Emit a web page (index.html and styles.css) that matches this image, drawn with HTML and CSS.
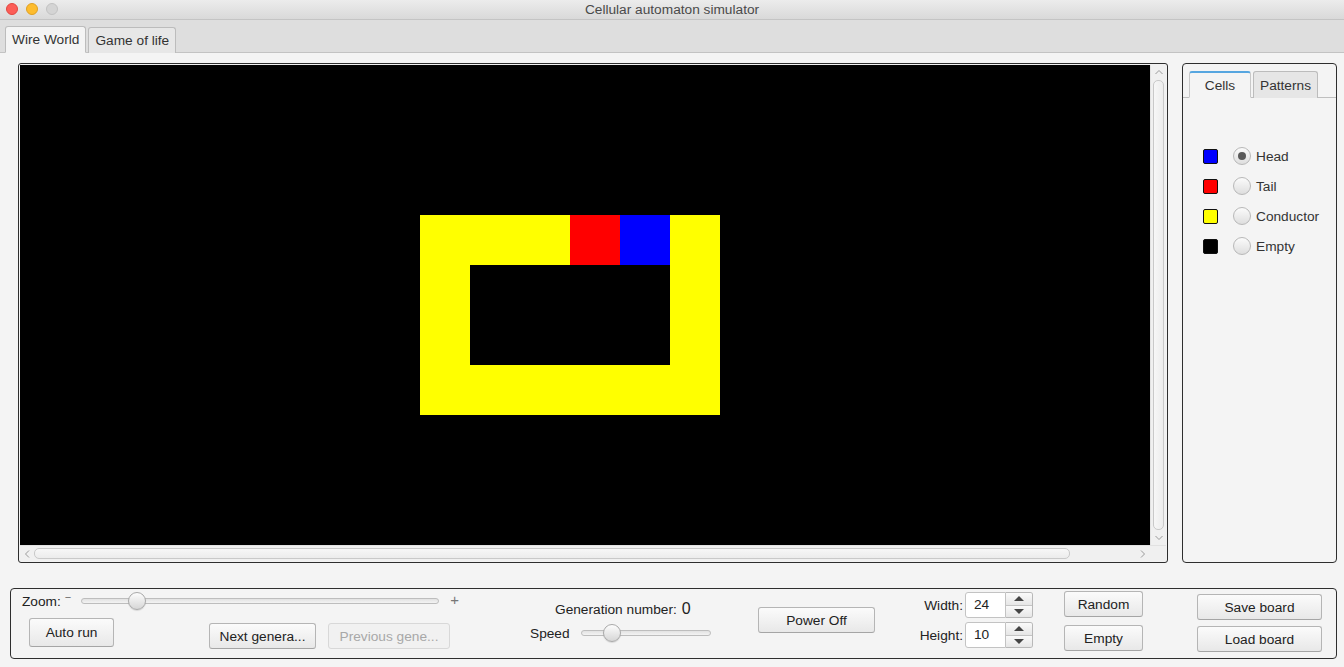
FILE: index.html
```html
<!DOCTYPE html>
<html>
<head>
<meta charset="utf-8">
<link rel="stylesheet" href="styles.css">
</head>
<body>
<div class="window">
  <div class="titlebar">
    <div class="lights"><span class="light red"></span><span class="light yellow"></span><span class="light gray"></span></div>
    <div class="title">Cellular automaton simulator</div>
  </div>
  <div class="tabbar">
    <div class="wtab active">Wire World</div>
    <div class="wtab">Game of life</div>
  </div>
  <div class="content">
    <div class="main">
      <div class="canvas-panel">
        <div class="board">
          <div class="pattern">
            <i class="c y"></i><i class="c y"></i><i class="c y"></i><i class="c r"></i><i class="c b"></i><i class="c y"></i>
            <i class="c y"></i><i class="c k"></i><i class="c k"></i><i class="c k"></i><i class="c k"></i><i class="c y"></i>
            <i class="c y"></i><i class="c k"></i><i class="c k"></i><i class="c k"></i><i class="c k"></i><i class="c y"></i>
            <i class="c y"></i><i class="c y"></i><i class="c y"></i><i class="c y"></i><i class="c y"></i><i class="c y"></i>
          </div>
        </div>
        <div class="vscroll">
          <svg class="arr" width="16" height="14" viewBox="0 0 16 14"><path d="M4.5 9 L8 5.5 L11.5 9" fill="none" stroke="#9a9a9a" stroke-width="1"/></svg>
          <div class="vthumb"></div>
          <svg class="arr" width="16" height="14" viewBox="0 0 16 14"><path d="M4.5 5 L8 8.5 L11.5 5" fill="none" stroke="#9a9a9a" stroke-width="1"/></svg>
        </div>
        <div class="hscroll">
          <svg class="arr" width="14" height="16" viewBox="0 0 14 16"><path d="M9 4.5 L5.5 8 L9 11.5" fill="none" stroke="#9a9a9a" stroke-width="1"/></svg>
          <div class="hthumb"></div>
          <svg class="arr" width="14" height="16" viewBox="0 0 14 16"><path d="M5 4.5 L8.5 8 L5 11.5" fill="none" stroke="#9a9a9a" stroke-width="1"/></svg>
        </div>
      </div>
      <div class="side-panel">
        <div class="stabs">
          <div class="stab active">Cells</div>
          <div class="stab">Patterns</div>
        </div>
        <div class="cells">
          <div class="cellrow"><span class="sw blue"></span><span class="radio on"></span><span class="lbl">Head</span></div>
          <div class="cellrow"><span class="sw red"></span><span class="radio"></span><span class="lbl">Tail</span></div>
          <div class="cellrow"><span class="sw yellow"></span><span class="radio"></span><span class="lbl">Conductor</span></div>
          <div class="cellrow"><span class="sw black"></span><span class="radio"></span><span class="lbl">Empty</span></div>
        </div>
      </div>
    </div>
    <div class="controls">
      <div class="col col1">
        <div class="zoomrow">
          <span class="lbl">Zoom:</span><span class="minus">−</span>
          <div class="slider zoomslider"><div class="track"></div><div class="thumb" style="left:47px"></div></div>
          <span class="plus">+</span>
        </div>
        <div class="btnrow">
          <button class="btn autorun">Auto run</button>
          <button class="btn next">Next genera...</button>
          <button class="btn prev" disabled>Previous gene...</button>
        </div>
      </div>
      <div class="col col2">
        <div class="genrow"><span class="lbl">Generation number:</span><span class="gen">0</span></div>
        <div class="speedrow">
          <span class="lbl">Speed</span>
          <div class="slider speedslider"><div class="track"></div><div class="thumb" style="left:22px"></div></div>
        </div>
      </div>
      <div class="col col3">
        <button class="btn power">Power Off</button>
      </div>
      <div class="col col4">
        <div class="sprow"><span class="lbl">Width:</span><div class="spinner"><div class="field">24</div><div class="arrows"><div class="up"><span class="tri-up"></span></div><div class="down"><span class="tri-down"></span></div></div></div></div>
        <div class="sprow"><span class="lbl">Height:</span><div class="spinner"><div class="field">10</div><div class="arrows"><div class="up"><span class="tri-up"></span></div><div class="down"><span class="tri-down"></span></div></div></div></div>
      </div>
      <div class="col col5">
        <button class="btn random">Random</button>
        <button class="btn empty">Empty</button>
      </div>
      <div class="col col6">
        <button class="btn save">Save board</button>
        <button class="btn load">Load board</button>
      </div>
    </div>
  </div>
</div>
</body>
</html>
```
FILE: styles.css
```css
* { box-sizing: border-box; }
html, body { margin: 0; padding: 0; }
body {
  width: 1344px; height: 667px; overflow: hidden;
  font-family: "Liberation Sans", Arial, sans-serif;
  font-size: 13.7px; color: #222;
  background: #f4f4f4;
}
.window { width: 1344px; height: 667px; display: flex; flex-direction: column; }

.titlebar {
  height: 20px; flex: none;
  background: linear-gradient(#ececec, #d9d9d9);
  border-bottom: 1px solid #c4c4c4;
  display: flex; align-items: center; justify-content: center;
  position: relative;
}
.lights { position: absolute; left: 6px; top: 3px; display: flex; gap: 8px; }
.light { width: 12px; height: 12px; border-radius: 50%; display: block; }
.light.red { background: #fc5d57; border: 1px solid #e2463f; }
.light.yellow { background: #fdbc2e; border: 1px solid #dfa023; }
.light.gray { background: #d4d4d4; border: 1px solid #c2c2c2; }
.title { color: #4a4a4a; line-height: 19px; }

.tabbar {
  height: 33px; flex: none;
  background: #dedede;
  border-bottom: 1px solid #c3c3c3;
  display: flex; align-items: flex-end; gap: 2px;
  padding-left: 5px;
}
.wtab {
  height: 26px; margin-bottom: -1px;
  border: 1px solid #bcbcbc; border-bottom: none;
  border-radius: 3px 3px 0 0;
  padding: 0 6px; line-height: 25px;
  background: #e7e7e7; color: #333;
}
.wtab.active { background: #f4f4f4; border-bottom: 1px solid #f4f4f4; height: 27px; }

.content { flex: 1; padding: 10px 0 0 10px; }
.main { display: flex; padding-left: 8px; gap: 14px; }

.canvas-panel {
  width: 1150px; height: 500px;
  border: 1px solid #2e2e2e; border-radius: 3px;
  padding: 1px 0 0 1px;
  background: #f2f2f2;
  display: grid;
  grid-template-columns: 1130px 16px;
  grid-template-rows: 480px 16px;
}
.board { background: #000; padding: 150px 0 0 400px; }
.pattern { display: grid; grid-template-columns: repeat(6, 50px); grid-template-rows: repeat(4, 50px); width: 300px; }
.c { display: block; }
.c.y { background: #ffff00; }
.c.r { background: #ff0000; }
.c.b { background: #0000ff; }
.c.k { background: #000; }

.vscroll {
  background: #f0f0f0; border-left: 1px solid #e2e2e2;
  display: flex; flex-direction: column; align-items: center;
}
.vscroll .arr { flex: none; }
.vthumb {
  width: 11px; flex: 1; margin: 1px 0;
  background: linear-gradient(90deg, #f7f7f7, #ececec);
  border: 1px solid #c9c9c9; border-radius: 5px;
}
.hscroll {
  grid-column: 1 / 3;
  background: #f0f0f0; border-top: 1px solid #e2e2e2;
  display: flex; align-items: center; padding-right: 16px;
}
.hscroll .arr { flex: none; }
.hscroll .arr:last-child { margin-left: 66px; }
.hthumb {
  height: 11px; flex: 1;
  background: linear-gradient(#f7f7f7, #ececec);
  border: 1px solid #c9c9c9; border-radius: 5px;
}

.side-panel {
  width: 155px; height: 500px;
  border: 1px solid #2e2e2e; border-radius: 4px;
  background: #f4f4f4;
}
.stabs {
  height: 34px; padding: 6px 0 0 6px;
  display: flex; gap: 2px; align-items: flex-end;
  border-bottom: 1px solid #bfbfbf;
}
.stab {
  height: 27px; margin-bottom: -1px;
  border: 1px solid #bcbcbc; border-bottom: none;
  border-radius: 3px 3px 0 0;
  background: #e6e6e6; color: #333;
  line-height: 27px; text-align: center; width: 65px;
}
.stab.active {
  width: 62px; background: #f4f4f4;
  border-color: #c8c8c8; border-top: 2px solid #56a6e0;
  border-bottom: 1px solid #f4f4f4; line-height: 26px;
}
.cells { padding: 43px 0 0 20px; }
.cellrow { height: 30px; display: flex; align-items: center; }
.sw { width: 15px; height: 15px; border: 1px solid #111; border-radius: 2px; display: block; }
.sw.blue { background: #0000ff; }
.sw.red { background: #ff0000; }
.sw.yellow { background: #ffff00; }
.sw.black { background: #000; }
.radio {
  width: 18px; height: 18px; border-radius: 50%;
  margin-left: 15px;
  border: 1px solid #b8b8b8;
  background: linear-gradient(#fbfbfb, #dedede);
  display: flex; align-items: center; justify-content: center;
}
.radio.on::after { content: ""; width: 8px; height: 8px; border-radius: 50%; background: #5a5a5a; }
.cellrow .lbl { margin-left: 5px; color: #333; }

.controls {
  margin-top: 25px;
  width: 1327px; height: 71px;
  border: 1px solid #2e2e2e; border-radius: 4px;
  display: flex; align-items: flex-start;
  padding-left: 11px;
}
.col { display: flex; flex-direction: column; flex: none; }
.lbl { color: #222; white-space: nowrap; }

.btn {
  font-family: inherit; font-size: 13.7px; color: #222;
  background: linear-gradient(#fbfbfb, #e8e8e8);
  border: 1px solid #b5b5b5; border-bottom-color: #a5a5a5;
  border-radius: 3px; height: 26px; padding: 0; white-space: nowrap;
}
.btn[disabled] { color: #a8a8a8; background: #f1f1f1; border-color: #d8d8d8; }

.col1 { width: 443px; padding-top: 4px; }
.zoomrow { display: flex; align-items: center; height: 16px; }
.minus { font-size: 11px; color: #666; margin-left: 4px; margin-top: -9px; }
.plus { font-size: 15px; color: #777; margin-left: 11px; margin-top: -4px; }
.slider { position: relative; height: 18px; }
.track {
  position: absolute; left: 0; right: 0; top: 6px; height: 6px;
  border: 1px solid #bdbdbd; border-radius: 3px;
  background: linear-gradient(#e2e2e2, #f3f3f3);
}
.thumb {
  position: absolute; top: 0; width: 18px; height: 18px; border-radius: 50%;
  border: 1px solid #a9a9a9;
  background: linear-gradient(#fdfdfd, #d6d6d6);
  box-shadow: 0 1px 1px rgba(0,0,0,0.12);
}
.zoomslider { width: 358px; margin-left: 10px; }
.btnrow { display: flex; align-items: flex-start; margin-top: 9px; }
.autorun { width: 85px; height: 29px; margin-left: 7px; }
.next { width: 107px; margin-left: 95px; margin-top: 5px; }
.prev { width: 122px; margin-left: 12px; margin-top: 5px; }

.col2 { width: 181px; margin-left: 65px; padding-top: 11px; }
.genrow { display: flex; align-items: center; height: 18px; padding-left: 25px; }
.gen { font-size: 16px; margin-left: 5px; color: #222; }
.speedrow { display: flex; align-items: center; height: 18px; margin-top: 6px; }
.speedslider { width: 130px; margin-left: 11px; }

.col3 { width: 117px; margin-left: 47px; padding-top: 18px; }
.power { width: 117px; }

.col4 { width: 111px; margin-left: 47px; padding-top: 3px; gap: 4px; }
.sprow { display: flex; align-items: center; justify-content: flex-end; height: 26px; }
.spinner { display: flex; height: 26px; margin-left: 2px; }
.field {
  width: 41px; height: 26px; background: #fff;
  border: 1px solid #c3c3c3; border-radius: 3px 0 0 3px;
  padding-left: 8px; line-height: 24px; color: #222;
}
.arrows { width: 27px; display: flex; flex-direction: column; border: 1px solid #b8b8b8; border-left: none; border-radius: 0 3px 3px 0; overflow: hidden; }
.arrows .up, .arrows .down {
  flex: 1; display: flex; align-items: center; justify-content: center;
  background: linear-gradient(#fafafa, #e6e6e6);
}
.arrows .down { border-top: 1px solid #c4c4c4; }
.tri-up { width: 0; height: 0; border-left: 5px solid transparent; border-right: 5px solid transparent; border-bottom: 5px solid #444; }
.tri-down { width: 0; height: 0; border-left: 5px solid transparent; border-right: 5px solid transparent; border-top: 5px solid #444; }

.col5 { width: 79px; margin-left: 31px; padding-top: 2px; gap: 8px; }
.col5 .btn { width: 79px; }

.col6 { width: 125px; margin-left: 54px; padding-top: 5px; gap: 6px; }
.col6 .btn { width: 125px; }
```
